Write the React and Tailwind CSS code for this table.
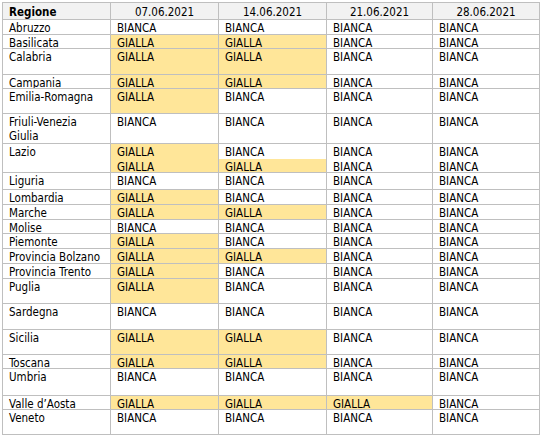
import React from "react";

const G = "GIALLA";
const B = "BIANCA";

const rows = [
  { name: "Abruzzo", h: 15, v: [B, B, B, B] },
  { name: "Basilicata", h: 14, v: [G, G, B, B] },
  { name: "Calabria", h: 26, v: [G, G, B, B] },
  { name: "Campania", h: 14, v: [G, G, B, B] },
  { name: "Emilia-Romagna", h: 25, v: [G, B, B, B] },
  { name: ["Friuli-Venezia", "Giulia"], h: 30, v: [B, B, B, B] },
  { name: "Lazio", h: 29, v: [[G, G], [B, G], [B, B], [B, B]] },
  { name: "Liguria", h: 17, v: [B, B, B, B] },
  { name: "Lombardia", h: 15, v: [G, B, B, B] },
  { name: "Marche", h: 15, v: [G, G, B, B] },
  { name: "Molise", h: 14, v: [B, B, B, B] },
  { name: "Piemonte", h: 15, v: [G, B, B, B] },
  { name: "Provincia Bolzano", h: 15, v: [G, G, B, B] },
  { name: "Provincia Trento", h: 15, v: [G, B, B, B] },
  { name: "Puglia", h: 25, v: [G, B, B, B] },
  { name: "Sardegna", h: 26, v: [B, B, B, B] },
  { name: "Sicilia", h: 25, v: [G, G, B, B] },
  { name: "Toscana", h: 14, v: [G, G, B, B] },
  { name: "Umbria", h: 27, v: [B, B, B, B] },
  { name: "Valle d\u2019Aosta", h: 14, v: [G, G, G, B] },
  { name: "Veneto", h: 25, v: [B, B, B, B] },
];

const widths = ["w-[108px]", "w-[108px]", "w-[108px]", "w-[106px]", "w-[107px]"];

function Value({ val }) {
  if (Array.isArray(val)) {
    return (
      <div className="flex flex-col h-full">
        {val.map((x, i) => (
          <div
            key={i}
            className={
              "flex-1 pl-[6px] pt-[1px] leading-[14px] " + (x === G ? "bg-[#ffe699]" : "bg-white")
            }
          >
            {x}
          </div>
        ))}
      </div>
    );
  }
  return (
    <div className={"h-full pl-[6px] pt-[1px] leading-[14px] " + (val === G ? "bg-[#ffe699]" : "bg-white")}>
      {val}
    </div>
  );
}

export default function App() {
  return (
    <div
      className="bg-white w-[542px] h-[437px] pt-[2px] pl-[2px] text-black text-[11.5px]"
      style={{ fontFamily: '"DejaVu Sans Condensed", "DejaVu Sans", sans-serif' }}
    >
      <div className="w-[538px] border-l border-t border-[#bfbfbf]">
        <div className="flex h-[17px] bg-[#f2f2f2]">
          <div className={widths[0] + " border-r border-b border-[#bfbfbf] pl-[6px] pt-[2px] leading-[14px] font-bold"}>
            Regione
          </div>
          {["07.06.2021", "14.06.2021", "21.06.2021", "28.06.2021"].map((d, i) => (
            <div
              key={d}
              className={widths[i + 1] + " border-r border-b border-[#bfbfbf] text-center pt-[2px] leading-[14px]"}
            >
              {d}
            </div>
          ))}
        </div>
        {rows.map((r) => (
          <div key={Array.isArray(r.name) ? r.name.join(" ") : r.name} className="flex" style={{ height: r.h }}>
            <div className={widths[0] + " border-r border-b border-[#bfbfbf] pl-[6px] pt-[1px] leading-[14px] overflow-hidden"}>
              {Array.isArray(r.name) ? (
                <>
                  {r.name[0]}
                  <br />
                  {r.name[1]}
                </>
              ) : (
                r.name
              )}
            </div>
            {r.v.map((val, i) => (
              <div key={i} className={widths[i + 1] + " border-r border-b border-[#bfbfbf] overflow-hidden"}>
                <Value val={val} />
              </div>
            ))}
          </div>
        ))}
      </div>
    </div>
  );
}
